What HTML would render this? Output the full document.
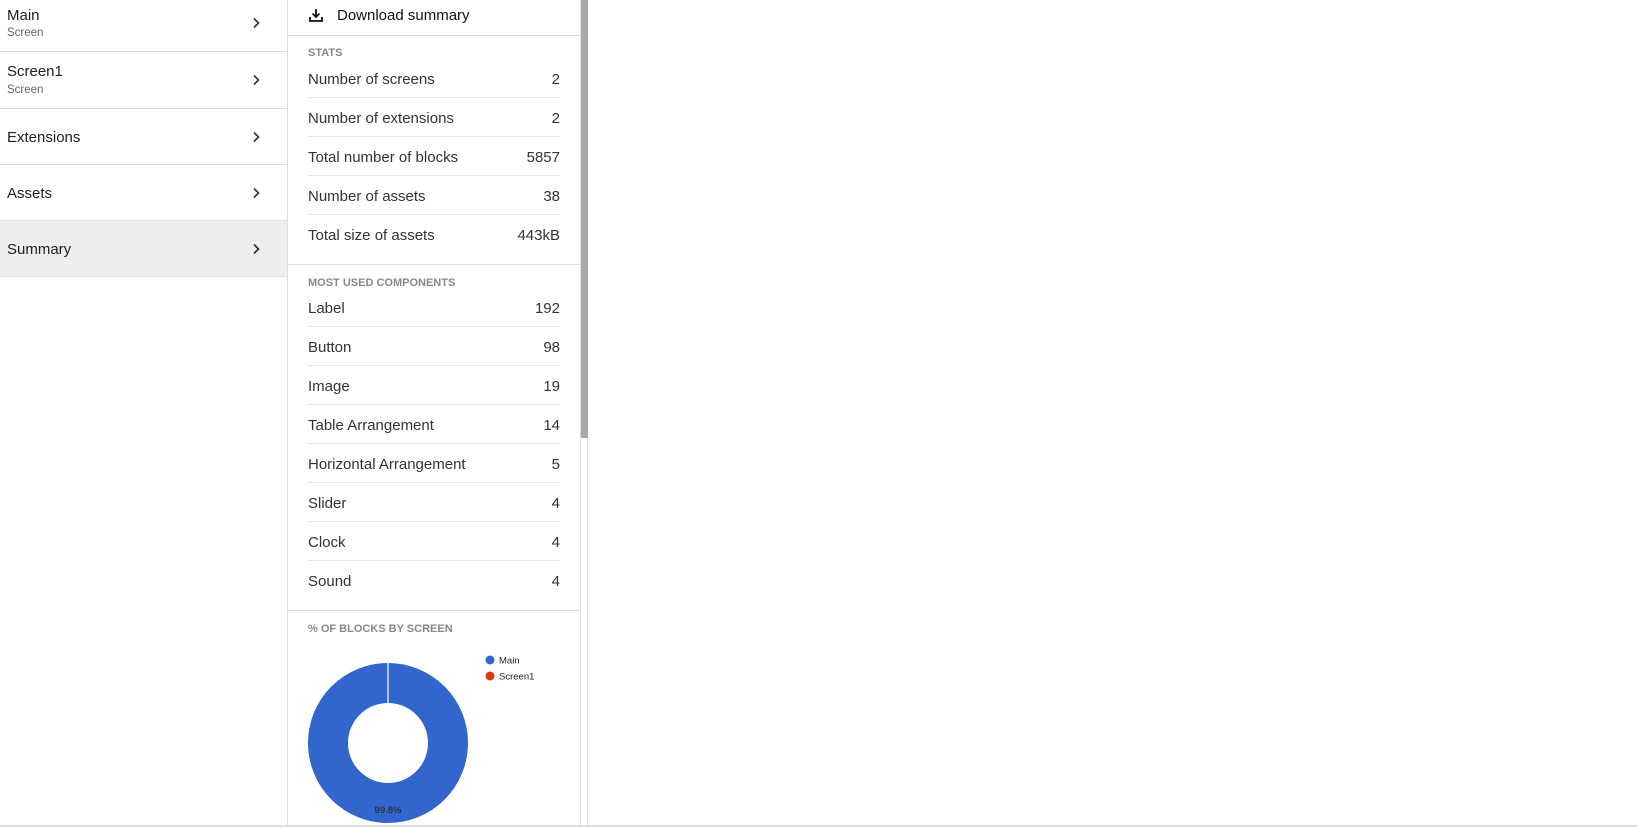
<!DOCTYPE html>
<html><head><meta charset="utf-8"><style>
*{margin:0;padding:0;box-sizing:border-box}
body{width:1637px;height:828px;background:#fff;font-family:"Liberation Sans",sans-serif;color:#212121;position:relative;overflow:hidden}
.left{position:absolute;left:0;top:0;width:288px;height:825px;border-right:1px solid #ddd}
.li{position:absolute;left:0;width:287px;border-bottom:1px solid #ddd}
.li .t{position:absolute;left:7px;font-size:15px;color:#212121}
.li .s{position:absolute;left:7px;font-size:11.5px;color:#666}
.chev{position:absolute;left:249px;width:14px;height:14px}
.mid{position:absolute;left:288px;top:0;width:292px;height:825px}
.dl{position:absolute;left:0;top:0;width:292px;height:36px;border-bottom:1px solid #ddd}
.sec{position:absolute;left:20px;font-size:11px;font-weight:bold;color:#888}
.row{position:absolute;left:20px;width:252px;height:39px;border-bottom:1px solid #e6e6e6;font-size:15px;color:#333}
.row span{position:absolute;top:12px}
.row .v{right:0}
.hr{position:absolute;left:0;width:292px;border-top:1px solid #ddd}
.sb{position:absolute;left:580px;top:0;width:8px;height:825px;border-left:1px solid #ddd;border-right:1px solid #ddd}
.thumb{position:absolute;left:0;top:0;width:7px;height:438px;background:#aaa}
.bot{position:absolute;left:0;top:825px;width:1637px;border-top:2px solid #ddd}
</style></head><body>
<div class="left">
 <div class="li" style="top:0;height:52px"><div class="t" style="top:7px">Main</div><div class="s" style="top:27px">Screen</div><svg class="chev" style="top:16px" viewBox="0 0 14 14"><path d="M5 2.5l4.5 4.5-4.5 4.5" fill="none" stroke="#333" stroke-width="1.7"/></svg></div>
 <div class="li" style="top:52px;height:57px"><div class="t" style="top:11px">Screen1</div><div class="s" style="top:32px">Screen</div><svg class="chev" style="top:21px" viewBox="0 0 14 14"><path d="M5 2.5l4.5 4.5-4.5 4.5" fill="none" stroke="#333" stroke-width="1.7"/></svg></div>
 <div class="li" style="top:109px;height:56px"><div class="t" style="top:20px">Extensions</div><svg class="chev" style="top:21px" viewBox="0 0 14 14"><path d="M5 2.5l4.5 4.5-4.5 4.5" fill="none" stroke="#333" stroke-width="1.7"/></svg></div>
 <div class="li" style="top:165px;height:56px"><div class="t" style="top:20px">Assets</div><svg class="chev" style="top:21px" viewBox="0 0 14 14"><path d="M5 2.5l4.5 4.5-4.5 4.5" fill="none" stroke="#333" stroke-width="1.7"/></svg></div>
 <div class="li" style="top:221px;height:56px;background:#eee"><div class="t" style="top:20px">Summary</div><svg class="chev" style="top:21px" viewBox="0 0 14 14"><path d="M5 2.5l4.5 4.5-4.5 4.5" fill="none" stroke="#333" stroke-width="1.7"/></svg></div>
</div>
<div class="mid">
 <div class="dl">
  <svg style="position:absolute;left:20px;top:7px" width="16" height="16" viewBox="0 0 16 16"><path d="M8 2v8M4.5 6.5L8 10l3.5-3.5" fill="none" stroke="#111" stroke-width="1.8"/><path d="M2 10v4h12v-4" fill="none" stroke="#111" stroke-width="1.8"/></svg>
  <div style="position:absolute;left:49px;top:7px;font-size:15px;color:#111">Download summary</div>
 </div>
 <div class="sec" style="top:47px">STATS</div>
 <div class="row" style="top:59px"><span>Number of screens</span><span class="v">2</span></div>
 <div class="row" style="top:98px"><span>Number of extensions</span><span class="v">2</span></div>
 <div class="row" style="top:137px"><span>Total number of blocks</span><span class="v">5857</span></div>
 <div class="row" style="top:176px"><span>Number of assets</span><span class="v">38</span></div>
 <div class="row" style="top:215px;border:none"><span>Total size of assets</span><span class="v">443kB</span></div>
 <div class="hr" style="top:264px"></div>
 <div class="sec" style="top:277px">MOST USED COMPONENTS</div>
 <div class="row" style="top:288px"><span>Label</span><span class="v">192</span></div>
 <div class="row" style="top:327px"><span>Button</span><span class="v">98</span></div>
 <div class="row" style="top:366px"><span>Image</span><span class="v">19</span></div>
 <div class="row" style="top:405px"><span>Table Arrangement</span><span class="v">14</span></div>
 <div class="row" style="top:444px"><span>Horizontal Arrangement</span><span class="v">5</span></div>
 <div class="row" style="top:483px"><span>Slider</span><span class="v">4</span></div>
 <div class="row" style="top:522px"><span>Clock</span><span class="v">4</span></div>
 <div class="row" style="top:561px;border:none"><span>Sound</span><span class="v">4</span></div>
 <div class="hr" style="top:610px"></div>
 <div class="sec" style="top:623px">% OF BLOCKS BY SCREEN</div>
 <svg style="position:absolute;left:0;top:640px" width="292" height="185">
  <circle cx="100" cy="103" r="60" fill="none" stroke="#3366cc" stroke-width="40"/>
  <line x1="100" y1="23" x2="100" y2="63" stroke="#fff" stroke-width="1.2"/>
  <text x="100" y="173" font-size="9.5" text-anchor="middle" fill="#222" font-family="Liberation Sans">99.8%</text>
  <circle cx="202" cy="20" r="4.5" fill="#3366cc"/>
  <text x="211" y="23.5" font-size="9.5" fill="#222" font-family="Liberation Sans">Main</text>
  <circle cx="202" cy="36" r="4.5" fill="#dc3912"/>
  <text x="211" y="39.5" font-size="9.5" fill="#222" font-family="Liberation Sans">Screen1</text>
 </svg>
</div>
<div class="sb"><div class="thumb"></div></div>
<div class="bot"></div>
</body></html>
